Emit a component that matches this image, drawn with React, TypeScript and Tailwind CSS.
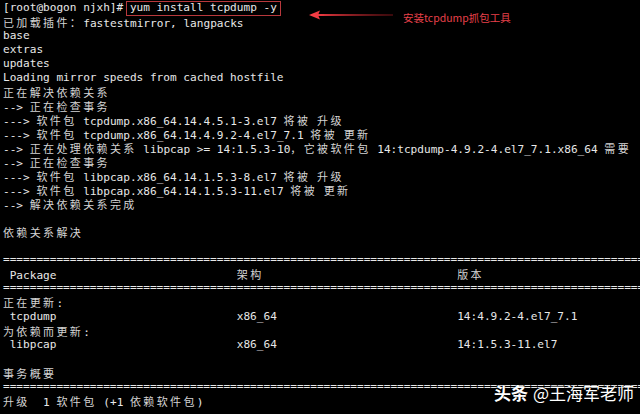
import React from 'react'

const SEP = '='.repeat(100)

const lines: string[] = [
  '[root@bogon njxh]# yum install tcpdump -y',
  '已加载插件：fastestmirror, langpacks',
  'base',
  'extras',
  'updates',
  'Loading mirror speeds from cached hostfile',
  '正在解决依赖关系',
  '--> 正在检查事务',
  '---> 软件包 tcpdump.x86_64.14.4.5.1-3.el7 将被 升级',
  '---> 软件包 tcpdump.x86_64.14.4.9.2-4.el7_7.1 将被 更新',
  '--> 正在处理依赖关系 libpcap >= 14:1.5.3-10，它被软件包 14:tcpdump-4.9.2-4.el7_7.1.x86_64 需要',
  '--> 正在检查事务',
  '---> 软件包 libpcap.x86_64.14.1.5.3-8.el7 将被 升级',
  '---> 软件包 libpcap.x86_64.14.1.5.3-11.el7 将被 更新',
  '--> 解决依赖关系完成',
  '',
  '依赖关系解决',
  '',
  SEP,
  ' Package' + ' '.repeat(27) + '架构' + ' '.repeat(29) + '版本',
  SEP,
  '正在更新:',
  ' tcpdump' + ' '.repeat(27) + 'x86_64' + ' '.repeat(27) + '14:4.9.2-4.el7_7.1',
  '为依赖而更新:',
  ' libpcap' + ' '.repeat(27) + 'x86_64' + ' '.repeat(27) + '14:1.5.3-11.el7',
  '',
  '事务概要',
  SEP,
  '升级  1 软件包 (+1 依赖软件包)',
]

// wide chars take two terminal cells
function Text({ s }: { s: string }) {
  const parts = s.split(/([\u2E80-\uFFEF]+)/)
  return (
    <>
      {parts.map((p, i) =>
        /[\u2E80-\uFFEF]/.test(p) ? (
          <span
            key={i}
            className="text-[11px] tracking-[2.37px] text-[#d4d4d4] [font-family:'Noto_Sans_CJK_SC',sans-serif]"
          >
            {p}
          </span>
        ) : (
          <span key={i}>{p}</span>
        )
      )}
    </>
  )
}

export default function App() {
  return (
    <div className="relative w-[640px] h-[414px] bg-black overflow-hidden">
      <div className="pt-[0.5px] pl-[3px] text-[11.1px] leading-[14.05px] text-[#e8e8e8] [font-family:'DejaVu_Sans_Mono','Noto_Sans_CJK_SC',monospace]">
        {lines.map((l, i) => (
          <div key={i} className="h-[14.05px] whitespace-pre">
            {i === 0 ? (
              <>
                <span>[root@bogon njxh]# </span>
                <span className="relative">
                  yum install tcpdump -y
                  <span className="absolute -left-[4px] -right-[4px] top-[0px] -bottom-[2px] border border-[#b8383c]" />
                </span>
              </>
            ) : (
              <Text s={l} />
            )}
          </div>
        ))}
      </div>

      {/* annotation */}
      <svg className="absolute left-[309px] top-[9px]" width="84" height="12" viewBox="0 0 84 12">
        <defs>
          <linearGradient id="arr" x1="0" x2="1" y1="0" y2="0">
            <stop offset="0" stopColor="#ff4048" />
            <stop offset="1" stopColor="#c02028" stopOpacity="0.6" />
          </linearGradient>
        </defs>
        <polygon points="0,6 11,1.5 9.5,5 84,5.6 84,6.4 9.5,7 11,10.5" fill="url(#arr)" />
      </svg>
      <div className="absolute left-[403px] top-[11px] text-[10.5px] leading-[13px] text-[#e8404a] [font-family:'Noto_Sans_CJK_SC',sans-serif]">
        安装tcpdump抓包工具
      </div>

      {/* watermark */}
      <div className="absolute left-[494px] top-[383px] flex items-center gap-[5px] text-[17px] leading-[20px] text-white [font-family:'Noto_Sans_CJK_SC',sans-serif] [text-shadow:0_0_2px_rgba(0,0,0,0.9)]">
        <span className="font-bold">头条</span>
        <span>@王海军老师</span>
      </div>
    </div>
  )
}
